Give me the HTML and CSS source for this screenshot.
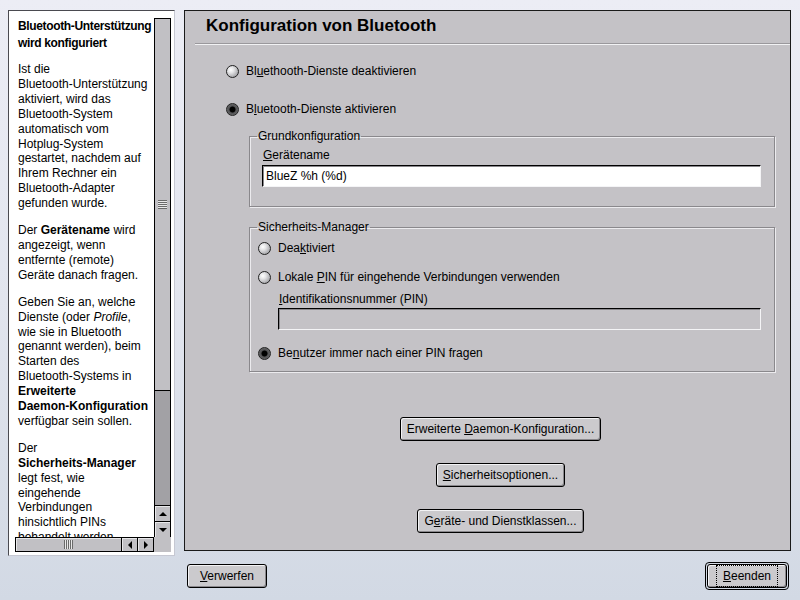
FILE: index.html
```html
<!DOCTYPE html>
<html lang="de">
<head>
<meta charset="utf-8">
<title>Konfiguration von Bluetooth</title>
<link rel="stylesheet" href="styles.css">
</head>
<body>
<div class="app">
  <aside class="help">
    <div class="scrollview">
      <div class="help-text">
        <p class="help-title"><span class="nw">Bluetooth-Unterstützung</span><br>wird konfiguriert</p>
        <p>Ist die <span class="nw">Bluetooth-Unterstützung</span> aktiviert, wird das <span class="nw">Bluetooth-System</span> automatisch vom <span class="nw">Hotplug-System</span> gestartet, nachdem auf Ihrem Rechner ein <span class="nw">Bluetooth-Adapter</span> gefunden wurde.</p>
        <p>Der <b>Gerätename</b> wird angezeigt, wenn entfernte (remote) Geräte danach fragen.</p>
        <p>Geben Sie an, welche Dienste (oder <i>Profile</i>, wie sie in Bluetooth genannt werden), beim Starten des <span class="nw">Bluetooth-Systems</span> in <b>Erweiterte <span class="nw">Daemon-Konfiguration</span></b> verfügbar sein sollen.</p>
        <p>Der <b class="nw">Sicherheits-Manager</b> legt fest, wie eingehende Verbindungen hinsichtlich PINs behandelt werden sollen.</p>
      </div>
      <div class="vscroll">
        <div class="vthumb"><span class="vgrip"></span></div>
        <div class="vtrough"></div>
        <div class="sbtn"><span class="tri-up"></span></div>
        <div class="sbtn"><span class="tri-down"></span></div>
      </div>
      <div class="hscroll">
        <div class="hthumb"><span class="hgrip"></span></div>
        <div class="sbtn"><span class="tri-left"></span></div>
        <div class="sbtn"><span class="tri-right"></span></div>
      </div>
      <div class="corner"></div>
    </div>
  </aside>

  <main class="main">
    <h1 class="title">Konfiguration von Bluetooth</h1>
    <div class="sep"></div>
    <div class="content">
      <div class="radio-row first"><span class="radio"></span><span>Bl<u>u</u>ethooth-Dienste deaktivieren</span></div>
      <div class="radio-row second"><span class="radio on"></span><span>B<u>l</u>uetooth-Dienste aktivieren</span></div>

      <fieldset class="group group-basic">
        <legend>Grundkonfiguration</legend>
        <div class="field-label"><u>G</u>erätename</div>
        <div class="input">BlueZ %h (%d)</div>
      </fieldset>

      <fieldset class="group group-sec">
        <legend>Sicherheits-Manager</legend>
        <div class="radio-row"><span class="radio"></span><span>Dea<u>k</u>tiviert</span></div>
        <div class="radio-row gap"><span class="radio"></span><span>Lokale <u>P</u>IN für eingehende Verbindungen verwenden</span></div>
        <div class="indent">
          <div class="field-label"><u>I</u>dentifikationsnummer (PIN)</div>
          <div class="input disabled pin"></div>
        </div>
        <div class="radio-row gap last"><span class="radio on"></span><span>Be<u>n</u>utzer immer nach einer PIN fragen</span></div>
      </fieldset>
    </div>
    <div class="actions">
      <button class="btn">Erweiterte <u>D</u>aemon-Konfiguration...</button>
      <button class="btn"><u>S</u>icherheitsoptionen...</button>
      <button class="btn">G<u>e</u>räte- und Dienstklassen...</button>
    </div>
  </main>
</div>

<footer class="footer">
  <button class="btn wide"><u>V</u>erwerfen</button>
  <span class="default-frame"><button class="btn wide"><span class="focus"><u>B</u>eenden</span></button></span>
</footer>
</body>
</html>
```

FILE: styles.css
```css
* { box-sizing: border-box; }

html, body {
  margin: 0;
  padding: 0;
}

body {
  width: 800px;
  height: 600px;
  overflow: hidden;
  background: linear-gradient(180deg, #ecedf5 0%, #e2e5ee 50%, #d2d9e4 100%);
  font-family: "Liberation Sans", Arial, sans-serif;
  font-size: 12px;
  color: #000;
}

.app {
  display: flex;
  align-items: flex-start;
  gap: 9px;
  padding: 10px 0 0 8px;
}

/* ---------- help panel ---------- */
.help {
  width: 167px;
  height: 546px;
  background: #fff;
  border: 1px solid;
  border-color: #4a4a50 #c6c8d2 #c6c8d2 #4a4a50;
  padding: 7px 3px 3px 6px;
}

.scrollview {
  display: grid;
  grid-template-columns: 139px 17px;
  grid-template-rows: 519px 15px;
  height: 534px;
}

.help-text {
  overflow: hidden;
  padding: 0 0 0 3px;
  width: 139px;
  line-height: 14.9px;
}

.help-text p {
  margin: 0 0 12px;
  width: 131px;
}

.nw { white-space: nowrap; }

.help-text .help-title {
  font-weight: bold;
  line-height: 17px;
  letter-spacing: -0.35px;
  margin-bottom: 10px;
}

.vscroll {
  display: flex;
  flex-direction: column;
  border-left: 1px solid #000;
  border-right: 1px solid #000;
  border-top: 1px solid #000;
}

.vthumb {
  height: 372px;
  background: #c1c0c4;
  border-bottom: 1px solid #000;
  display: flex;
  align-items: center;
  justify-content: center;
}

.vgrip {
  width: 9px;
  height: 9px;
  background: repeating-linear-gradient(180deg, #6a6a6a 0 1px, #e8e8e8 1px 2px);
}

.vtrough {
  flex: 1;
  background: #a2a1a5;
}

.sbtn {
  width: 16px;
  height: 16px;
  background: #c1c0c4;
  border: 1px solid #000;
  display: flex;
  align-items: center;
  justify-content: center;
  box-shadow: inset 1px 1px 0 #e8e8ea;
}

.vscroll .sbtn {
  width: 15px;
  border-left: 0;
  border-right: 0;
  border-bottom: 0;
}

.tri-up, .tri-down, .tri-left, .tri-right {
  width: 0;
  height: 0;
  border: 4px solid transparent;
}
.tri-up { border-bottom-color: #000; border-top-width: 0; }
.tri-down { border-top-color: #000; border-bottom-width: 0; }
.tri-left { border-right-color: #000; border-left-width: 0; }
.tri-right { border-left-color: #000; border-right-width: 0; }

.hscroll {
  display: flex;
  height: 15px;
  border-top: 1px solid #000;
  border-bottom: 1px solid #000;
  border-left: 1px solid #000;
  background: #c1c0c4;
}

.hthumb {
  flex: 1;
  display: flex;
  align-items: center;
  justify-content: center;
  border-right: 1px solid #000;
  box-shadow: inset 1px 1px 0 #e8e8ea;
}

.hgrip {
  width: 9px;
  height: 9px;
  background: repeating-linear-gradient(90deg, #6a6a6a 0 1px, #e8e8e8 1px 2px);
}

.hscroll .sbtn {
  height: 13px;
  border-top: 0;
  border-bottom: 0;
  border-left: 0;
}

.corner {
  background: #c1c0c4;
}

/* ---------- main panel ---------- */
.main {
  width: 607px;
  height: 541px;
  background: #c4c2c6;
  border: 1px solid #1a1a1a;
}

.title {
  margin: 0;
  padding: 5px 0 0 21px;
  height: 32px;
  font-size: 17px;
  line-height: 20px;
  font-weight: bold;
}

.sep {
  margin-left: 10px;
  height: 2px;
  border-top: 1px solid #9a989c;
  border-bottom: 1px solid #f2f2f4;
}

.content {
  display: flex;
  flex-direction: column;
  padding: 0 15px 0 41px;
}

.radio-row {
  display: flex;
  align-items: center;
  gap: 7px;
  height: 16px;
}

.radio-row.first { margin-top: 18px; }
.radio-row.second { margin-top: 22px; }
.radio-row.gap { margin-top: 13px; }
.radio-row.last { margin-top: 15px; }

.radio {
  width: 13px;
  height: 13px;
  flex: none;
  border-radius: 50%;
  border: 1px solid #222;
  background: radial-gradient(circle at 35% 35%, #ffffff 0, #e4e4e6 30%, #a8a8ac 75%, #8a8a8e 100%);
}

.radio.on {
  background: radial-gradient(circle at 50% 50%, #000 0 2.6px, #505052 3.4px, #7a7a7c 100%);
}

.group {
  margin: 0 0 0 23px;
  border: 1px solid #8a888c;
  box-shadow: inset 1px 1px 0 #ecebee, 1px 1px 0 #ecebee;
  min-width: 0;
}

.group legend {
  padding: 0 1px;
  line-height: 14px;
}

.group-basic {
  margin-top: 12px;
  padding: 5px 13px 19px 12px;
}

.group-basic .input { margin-top: 3px; }

.group-basic legend { margin-left: -5px; }

.group-sec {
  margin-top: 13px;
  padding: 6px 13px 10px 8px;
}

.group-sec legend { margin-left: -1px; }

.field-label {
  line-height: 14px;
  padding-left: 1px;
}

.input {
  margin-top: 4px;
  height: 22px;
  background: #fff;
  border: 1px solid;
  border-color: #000 #f4f4f6 #f4f4f6 #000;
  box-shadow: inset 1px 1px 0 #8a888c;
  padding: 3px 0 0 3px;
  line-height: 14px;
}

.input.disabled {
  background: #c4c2c6;
}

.input.pin {
  margin-top: 2px;
}

.indent {
  padding-left: 20px;
  margin-top: 7px;
}

.actions {
  display: flex;
  flex-direction: column;
  align-items: center;
  gap: 22px;
  padding-left: 26px;
  margin-top: 45px;
}

.btn {
  height: 24px;
  padding: 0 6px;
  font-family: inherit;
  font-size: 12px;
  color: #000;
  background: #cbcacd;
  border: 1px solid #000;
  border-radius: 3px;
  box-shadow: inset 1px 1px 0 #f2f2f4, inset -1px -1px 0 #8a888c;
  line-height: 14px;
  cursor: default;
}

.btn.wide {
  width: 80px;
}

.footer {
  display: flex;
  justify-content: space-between;
  align-items: center;
  padding: 0 11px 0 187px;
  margin-top: 6px;
}

.default-frame {
  display: flex;
  padding: 1px;
  border: 1px solid #000;
  border-radius: 4px;
}

.focus {
  display: inline-block;
  outline: 1px dotted #000;
  outline-offset: 3px;
  padding: 0 3px;
}
```
